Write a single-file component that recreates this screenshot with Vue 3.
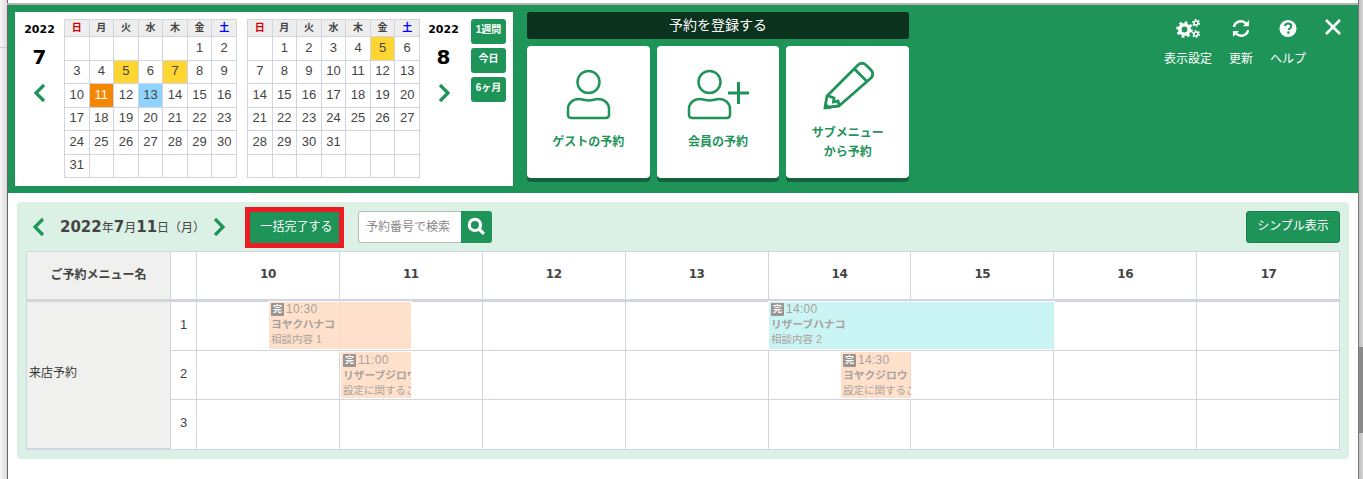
<script setup>
const heads = ['日','月','火','水','木','金','土']
const headClass = { 0: 'sun', 6: 'sat' }
const july = [
  ['','','','','','1','2'],
  ['3','4','5','6','7','8','9'],
  ['10','11','12','13','14','15','16'],
  ['17','18','19','20','21','22','23'],
  ['24','25','26','27','28','29','30'],
  ['31','','','','','','']
]
const aug = [
  ['','1','2','3','4','5','6'],
  ['7','8','9','10','11','12','13'],
  ['14','15','16','17','18','19','20'],
  ['21','22','23','24','25','26','27'],
  ['28','29','30','31','','',''],
  ['','','','','','','']
]
const julyMarks = { 5: 'yellow', 7: 'yellow', 11: 'orange', 13: 'blue' }
const augMarks = { 5: 'yellow' }
const months = [
  { key: 'jul', rows: july, marks: julyMarks },
  { key: 'aug', rows: aug, marks: augMarks }
]
const hours = [10, 11, 12, 13, 14, 15, 16, 17]
const bookings = [
  [
    { left: 71, width: 144, tone: 'peach', time: '10:30', name: 'ヨヤクハナコ', note: '相談内容 1' },
    { left: 571, width: 287, tone: 'cyan', time: '14:00', name: 'リザーブハナコ', note: '相談内容 2' }
  ],
  [
    { left: 143, width: 72, tone: 'peach', time: '11:00', name: 'リザーブジロウ', note: '設定に関するご相談' },
    { left: 643, width: 72, tone: 'peach', time: '14:30', name: 'ヨヤクジロウ', note: '設定に関するご相談' }
  ],
  []
]
</script>

<template>
  <div class="page">
    <div class="chrome-left"></div>
    <main class="main">
      <header class="topbar">
        <section class="calendar">
          <div class="month-side">
            <div class="year">2022</div>
            <div class="month">7</div>
            <svg class="chev" viewBox="0 0 14 20"><path d="M11 2 3 10l8 8" /></svg>
          </div>
          <div class="cals">
            <table v-for="m in months" :key="m.key" class="cal">
              <thead>
                <tr><th v-for="(h, i) in heads" :key="h" :class="headClass[i]">{{ h }}</th></tr>
              </thead>
              <tbody>
                <tr v-for="(row, r) in m.rows" :key="r">
                  <td v-for="(d, c) in row" :key="c" :class="m.marks[d]">{{ d }}</td>
                </tr>
              </tbody>
            </table>
          </div>
          <div class="month-side right">
            <div class="year">2022</div>
            <div class="month">8</div>
            <svg class="chev" viewBox="0 0 14 20"><path d="M3 2l8 8-8 8" /></svg>
          </div>
          <div class="ranges">
            <button>1週間</button>
            <button>今日</button>
            <button>6ヶ月</button>
          </div>
        </section>

        <section class="register">
          <div class="reg-title">予約を登録する</div>
          <div class="reg-cards">
            <div class="reg-card">
              <svg class="reg-icon" viewBox="0 0 66 54" fill="none">
                <circle cx="33.500" cy="14" r="11" />
                <path d="M16 50a3 3 0 0 1-3-3v-6c0-6 5-10 11-10 3 0 6 1.500 9.500 1.500S40 31 43 31c6 0 11 4 11 10v6a3 3 0 0 1-3 3z" />
              </svg>
              <div class="reg-label">ゲストの予約</div>
            </div>
            <div class="reg-card">
              <svg class="reg-icon" viewBox="0 0 66 54" fill="none">
                <circle cx="24.500" cy="14" r="11" />
                <path d="M7 50a3 3 0 0 1-3-3v-6c0-6 5-10 11-10 3 0 6 1.500 9.500 1.500S31 31 34 31c6 0 11 4 11 10v6a3 3 0 0 1-3 3z" />
                <path class="plus" d="M43 25h21M53.500 14v22" />
              </svg>
              <div class="reg-label">会員の予約</div>
            </div>
            <div class="reg-card pencil">
              <svg class="reg-icon tall" viewBox="0 0 52 52" fill="none">
                <path d="M3 47.500 5 36 36 5q4-3.500 8 0l5 5q3.500 4 0 8L17 46z" stroke-linejoin="round" />
                <path d="M32.500 9 45 21.500" />
                <path d="M5 35.500l7 2.500-.5 4 4.500-1 1.500 5" stroke-linejoin="miter" />
                <path class="tip" d="M1.500 49.500 3 42l6.500 6.500z" />
              </svg>
              <div class="reg-label">サブメニュー<br />から予約</div>
            </div>
          </div>
        </section>

        <nav class="tools">
          <div class="tool">
            <svg class="tool-icon" viewBox="0 0 24 19" fill="none" stroke="#fff">
              <circle cx="8.500" cy="10.500" r="4.700" stroke-width="3.600" />
              <circle cx="8.500" cy="10.500" r="7" stroke-width="2.600" stroke-dasharray="2.750" />
              <circle cx="20" cy="4" r="2" stroke-width="1.600" />
              <circle cx="20" cy="4" r="3.300" stroke-width="1.500" stroke-dasharray="1.730" />
              <circle cx="20" cy="15" r="2" stroke-width="1.600" />
              <circle cx="20" cy="15" r="3.300" stroke-width="1.500" stroke-dasharray="1.730" />
            </svg>
            <span>表示設定</span>
          </div>
          <div class="tool">
            <svg class="tool-icon" viewBox="0 0 24 20" fill="none" stroke="#fff" stroke-width="2.600">
              <path d="M4.500 8.500A7.500 7.500 0 0 1 17.500 5" />
              <path d="M19.500 11.500A7.500 7.500 0 0 1 6.500 15" />
              <path d="M20.500 1v6.500H14z" fill="#fff" stroke="none" />
              <path d="M3.500 19v-6.500H10z" fill="#fff" stroke="none" />
            </svg>
            <span>更新</span>
          </div>
          <div class="tool">
            <svg class="tool-icon" viewBox="0 0 24 20">
              <circle cx="12" cy="10" r="9" fill="#fff" />
              <path d="M8.800 7.500c.2-1.800 1.500-2.800 3.300-2.800 1.900 0 3.300 1.100 3.300 2.800 0 2.300-2.600 2.200-2.600 4" fill="none" stroke="#1e9459" stroke-width="2.200" />
              <rect x="11.300" y="13" width="2.400" height="2.400" fill="#1e9459" />
            </svg>
            <span>ヘルプ</span>
          </div>
          <svg class="close" viewBox="0 0 18 18"><path d="M2 2l14 14M16 2 2 16" /></svg>
        </nav>
      </header>

      <section class="schedule">
        <div class="toolbar">
          <svg class="chev small first" viewBox="0 0 14 20"><path d="M11 2 3 10l8 8" /></svg>
          <div class="date"><b>2022</b>年<b>7</b>月<b>11</b>日（月）</div>
          <svg class="chev small" viewBox="0 0 14 20"><path d="M3 2l8 8-8 8" /></svg>
          <button class="bulk">一括完了する</button>
          <div class="search">
            <input placeholder="予約番号で検索" />
            <button aria-label="検索">
              <svg viewBox="0 0 18 18" fill="none"><circle cx="7.500" cy="7.500" r="5.300" /><path d="M11.500 11.500 16 16" /></svg>
            </button>
          </div>
          <button class="simple">シンプル表示</button>
        </div>

        <div class="grid">
          <div class="grid-head">
            <div class="menu-head">ご予約メニュー名</div>
            <div class="num-head"></div>
            <div class="hours">
              <div v-for="h in hours" :key="h" class="hour">{{ h }}</div>
            </div>
          </div>
          <div class="grid-body">
            <div class="menu-name">来店予約</div>
            <div class="rows">
              <div v-for="(row, i) in bookings" :key="i" class="row">
                <div class="num">{{ i + 1 }}</div>
                <div class="slots">
                  <div v-for="h in hours" :key="h" class="slot"></div>
                  <div
                    v-for="b in row"
                    :key="b.time"
                    class="booking"
                    :class="b.tone"
                    :style="{ left: b.left + 'px', width: b.width + 'px' }"
                  >
                    <div class="b-time"><i>完</i>{{ b.time }}</div>
                    <div class="b-name">{{ b.name }}</div>
                    <div class="b-note">{{ b.note }}</div>
                  </div>
                </div>
              </div>
            </div>
          </div>
        </div>
      </section>
    </main>
    <div class="scrollbar"><div class="thumb"></div></div>
  </div>
</template>

<style>
html, body { margin: 0; background: #fff; overflow: hidden; }
</style>

<style scoped>
.page {
  width: 1363px;
  height: 479px;
  display: flex;
  overflow: hidden;
  font-family: "Liberation Sans", "Noto Sans CJK JP", sans-serif;
  color: #444;
  background: #fff;
  box-sizing: border-box;
  padding-top: 5px;
  position: relative;
}
.page::before {
  content: "";
  position: absolute;
  left: 7px;
  right: 5px;
  top: 3px;
  height: 2px;
  background: #b4b4b4;
}
.chrome-left {
  width: 8px;
  flex: none;
  background:
    linear-gradient(#ccc, #ccc) 0 47px / 100% 1px no-repeat,
    linear-gradient(90deg, #f6f6f6, #dcdcdc);
  border-right: 1px solid #666;
  box-sizing: border-box;
  margin-top: -5px;
}
.main { width: 1350px; flex: none; }
.scrollbar {
  width: 5px;
  flex: none;
  background: linear-gradient(90deg, #bcbcbc, #d6d6d6);
  border-left: 1px solid #777;
  box-sizing: border-box;
  margin-top: -5px;
  padding-top: 347px;
}
.thumb { height: 86px; background: #8a8a8a; }

.topbar {
  height: 188px;
  background: #1e9459;
  display: flex;
  box-sizing: border-box;
  padding: 7px 0 0 7px;
}
.calendar {
  width: 498px;
  height: 174px;
  background: #fff;
  display: flex;
  flex: none;
}
.month-side {
  width: 49px;
  flex: none;
  display: flex;
  flex-direction: column;
  align-items: center;
  color: #000;
}
.month-side.right { width: 47px; }
.year { font: bold 11px/12px "DejaVu Sans", sans-serif; margin-top: 12px; }
.month { font: bold 20px/24px "DejaVu Sans", sans-serif; margin-top: 9px; }
.chev { width: 14px; height: 20px; margin-top: 14px; fill: none; stroke: #1e9459; stroke-width: 3.200; }
.cals { display: flex; gap: 10px; margin: 7px 0 0 0; }
.cal {
  border-collapse: collapse;
  table-layout: fixed;
  width: 173px;
  height: 159px;
  font-size: 13px;
  color: #444;
}
.cal th, .cal td {
  border: 1px solid #d2d5df;
  padding: 0;
  text-align: center;
  line-height: 14px;
  font-weight: normal;
}
.cal th {
  height: 16px;
  background: #eee;
  font-size: 10px;
  font-weight: bold;
}
.cal td { height: 22px; font-size: 13px; padding-bottom: 1px; box-sizing: border-box; }
.cal th.sun { color: #c00; }
.cal th.sat { color: #00f; }
.cal td.yellow { background: #ffd531; }
.cal td.orange { background: #f58700; color: #fff; }
.cal td.blue { background: #8fd4ff; }
.ranges {
  display: flex;
  flex-direction: column;
  gap: 4px;
  margin: 7px 0 0 4px;
}
.ranges button {
  width: 35px;
  height: 25px;
  border: 0;
  padding: 0 0 3px;
  border-radius: 3px;
  background: #1e9459;
  color: #fff;
  font: bold 10px/20px "Liberation Sans", "Noto Sans CJK JP", sans-serif;
}

.register { width: 382px; margin-left: 14px; flex: none; }
.reg-title {
  height: 27px;
  background: #0a321d;
  color: #fff;
  border-radius: 3px;
  text-align: center;
  font-size: 14px;
  line-height: 26px;
}
.reg-cards { display: flex; gap: 7px; margin-top: 7px; }
.reg-card {
  flex: 1;
  height: 132px;
  background: #fff;
  border-radius: 4px;
  box-shadow: 0 4px 0 #14633c;
  display: flex;
  flex-direction: column;
  align-items: center;
  color: #1e9459;
}
.reg-icon {
  width: 66px;
  height: 54px;
  margin-top: 22px;
  stroke: #1e9459;
  stroke-width: 2.500;
}
.reg-icon .plus { stroke-width: 3; }
.reg-icon .tip { fill: #1e9459; stroke: none; }
.reg-icon.tall { width: 52px; height: 52px; margin-top: 14px; stroke-width: 2.800; }
.reg-label {
  font-size: 12px;
  font-weight: bold;
  line-height: 19px;
  text-align: center;
  margin-top: 11px;
}
.pencil .reg-label { margin-top: 12px; }

.tools {
  flex: 1;
  display: flex;
  position: relative;
  color: #fff;
  font-size: 12px;
  padding-left: 255px;
}
.tool { display: flex; flex-direction: column; align-items: center; margin-right: 17px; }
.tool-icon { width: 24px; height: 19px; margin-top: 7px; }
.tool span { margin-top: 12px; line-height: 18px; white-space: nowrap; }
.close {
  position: absolute;
  right: 16px;
  top: 6px;
  width: 18px;
  height: 18px;
  fill: none;
  stroke: #fff;
  stroke-width: 2.600;
}

.schedule {
  margin: 9px 9px 0 9px;
  height: 257px;
  background: #dcf1e5;
  border-radius: 4px;
  padding: 0 9px;
  box-sizing: border-box;
}
.toolbar { height: 49px; display: flex; align-items: center; }
.chev.small { width: 14px; height: 20px; margin: 0 0 0 7px; }
.chev.small.first { margin-left: 6px; }
.date { margin-left: 14px; font-size: 12px; color: #444; white-space: nowrap; }
.date b { font: bold 15px "DejaVu Sans", sans-serif; }
.bulk {
  margin: 2px 0 0 19px;
  width: 99px;
  height: 41px;
  box-sizing: border-box;
  border: 5px solid #ec1c24;
  background: #1e9459;
  color: #fff;
  font: 12px "Liberation Sans", "Noto Sans CJK JP", sans-serif;
  padding: 0 0 4px 4px;
}
.search { display: flex; margin-left: 14px; }
.search input {
  width: 103px;
  height: 32px;
  box-sizing: border-box;
  border: 1px solid #bbb;
  border-right: 0;
  border-radius: 3px 0 0 3px;
  padding: 0 7px;
  font: 12px "Liberation Sans", "Noto Sans CJK JP", sans-serif;
  background: #fff;
  outline: 0;
}
.search input::placeholder { color: #888; }
.search button {
  width: 31px;
  height: 32px;
  border: 0;
  padding: 6px;
  box-sizing: border-box;
  background: #1e9459;
  border-radius: 0 3px 3px 0;
}
.search svg { width: 19px; height: 19px; stroke: #fff; stroke-width: 3; display: block; }
.simple {
  margin: 1px 0 0 auto;
  width: 94px;
  height: 32px;
  border: 1px solid #17814c;
  border-radius: 3px;
  background: #1e9459;
  color: #fff;
  font: 12px "Liberation Sans", "Noto Sans CJK JP", sans-serif;
  padding: 0 0 5px;
}

.grid {
  border: 1px solid #d2d5df;
  background: #fff;
  box-sizing: border-box;
  width: 1314px;
}
.grid-head {
  display: flex;
  height: 47px;
  border-bottom: 3px solid #d2d5df;
}
.menu-head {
  width: 144px;
  flex: none;
  background: #f0f1ef;
  border-right: 1px solid #d2d5df;
  box-sizing: border-box;
  font-size: 12px;
  font-weight: bold;
  text-align: center;
  line-height: 47px;
}
.num-head { width: 26px; flex: none; border-right: 1px solid #d2d5df; box-sizing: border-box; }
.hours, .slots {
  flex: 1;
  display: grid;
  grid-template-columns: repeat(8, 1fr);
  margin-right: -1px;
}
.hour {
  border-right: 1px solid #d2d5df;
  text-align: center;
  font: bold 12px/45px "DejaVu Sans", sans-serif;
  letter-spacing: -.5px;
  color: #444;
}
.hour:last-child { border-right: 0; }
.grid-body { display: flex; }
.menu-name {
  width: 144px;
  flex: none;
  background: #f0f1ef;
  border-right: 1px solid #d2d5df;
  border-bottom: 2px solid #d2d5df;
  box-sizing: border-box;
  display: flex;
  align-items: center;
  padding: 0 0 8px 2px;
  font-size: 12px;
  color: #333;
  margin-bottom: -1px;
}
.rows { flex: 1; }
.row { display: flex; height: 49px; border-bottom: 1px solid #d2d5df; box-sizing: border-box; }
.row:last-child { border-bottom: 0; }
.num {
  width: 26px;
  flex: none;
  border-right: 1px solid #d2d5df;
  box-sizing: border-box;
  text-align: center;
  font-size: 13px;
  line-height: 46px;
  color: #444;
}
.slots { position: relative; }
.slot { border-right: 1px solid #d2d5df; }
.slot:nth-child(8) { border-right: 0; }
.booking {
  position: absolute;
  top: 0;
  height: 48px;
  overflow: hidden;
  box-sizing: border-box;
  border: 1px solid #fff;
  padding: 1px 0 0 2px;
  white-space: nowrap;
}
.row:first-child .booking { top: -1px; height: 49px; padding-top: 0; }
.booking.peach { background: rgba(255, 218, 194, .85); background-clip: padding-box; }
.booking.cyan { background: rgba(194, 242, 243, .85); background-clip: padding-box; }
.b-time { font-size: 12px; display: flex; align-items: center; height: 16px; margin-top: -1px; color: #aaa39d; letter-spacing: .3px; }
.b-time i {
  font-style: normal;
  font-size: 9px;
  font-weight: bold;
  background: #9b9591;
  color: #fff;
  width: 13px;
  height: 13px;
  line-height: 13px;
  text-align: center;
  border-radius: 1px;
  margin-right: 2px;
  letter-spacing: 0;
}
.b-name { font-size: 10.750px; font-weight: bold; line-height: 15px; color: #a8a29d; }
.b-note { font-size: 10.500px; line-height: 15px; color: #aaa39d; }
</style>
